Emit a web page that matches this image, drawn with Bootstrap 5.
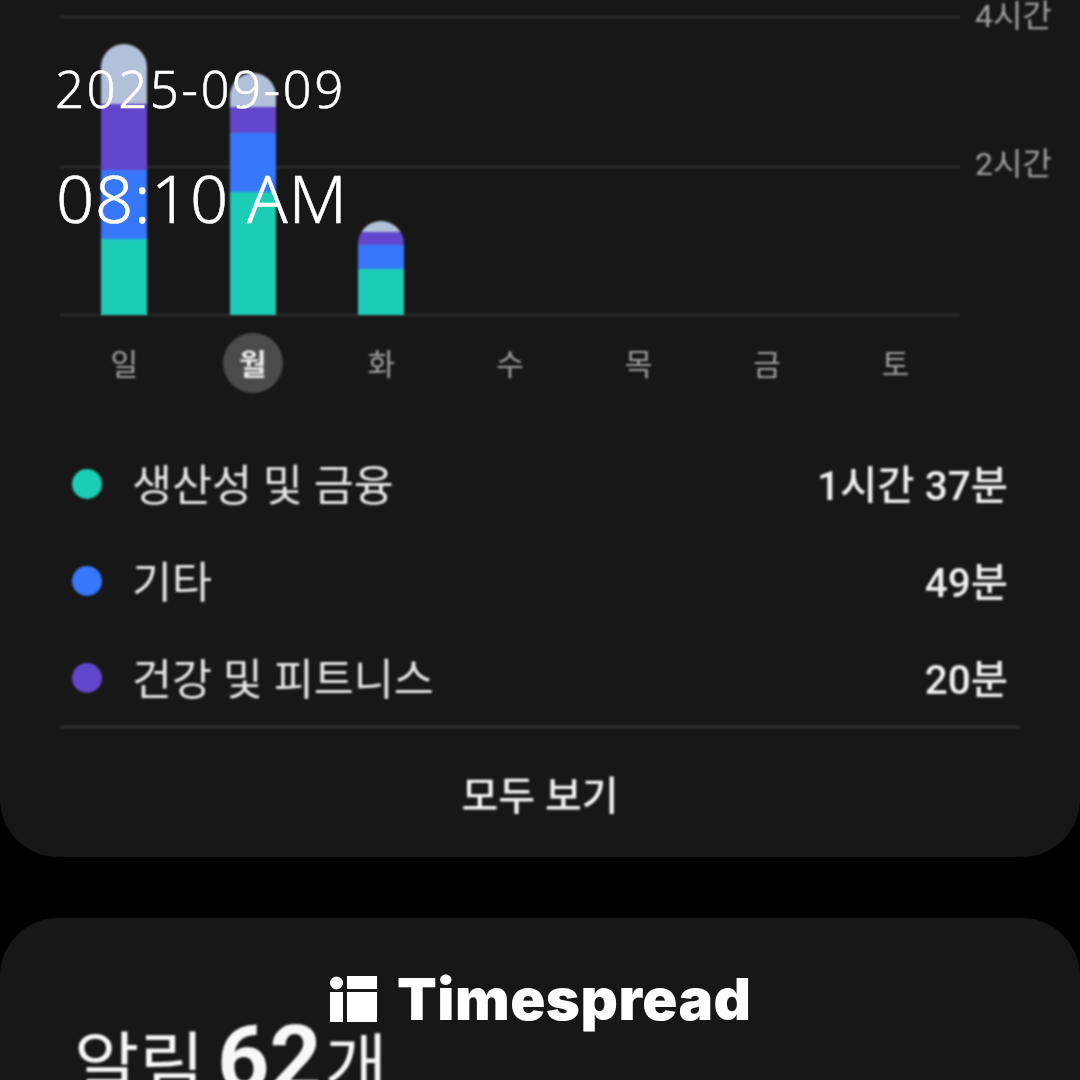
<!DOCTYPE html>
<html lang="ko">
<head>
  <meta charset="UTF-8" />
  <meta name="viewport" content="width=device-width, initial-scale=1.0"/>
  <title>Timespread</title>
  <link href="https://cdn.jsdelivr.net/npm/bootstrap@5.3.0/dist/css/bootstrap.min.css" rel="stylesheet" />
  <style>
    html, body {
      height: 1080px;
      overflow: hidden;
      background: #000;
    }
    body {
      font-family: Roboto, "Noto Sans CJK KR", sans-serif;
      position: relative;
    }
    .panel {
      background: #171717;
    }
    .soft {
      filter: blur(.8px);
    }
    .usage-panel {
      height: 857px;
      border-radius: 0 0 58px 58px;
      padding: 16px 60px 0;
    }
    .notice-panel {
      height: 162px;
      margin-top: 61px;
      border-radius: 58px 58px 0 0;
      padding: 96px 0 0 74px;
      color: #f8f8f8;
      font-size: 71px;
      line-height: 84px;
      font-weight: 400;
      white-space: nowrap;
    }
    .notice-panel b {
      font-size: 91px;
      font-weight: 700;
      line-height: 1;
      margin: 0 0 0 -5px;
    }
    .notice-unit {
      font-size: 68px;
      margin-left: 3px;
    }
    .plot {
      position: relative;
      width: 900px;
      height: 300px;
    }
    .grid-line {
      position: absolute;
      left: 0;
      right: 0;
      height: 2px;
      background: #303030;
    }
    .axis-label {
      position: absolute;
      left: 915px;
      color: #a2a2a2;
      font-size: 32px;
      line-height: 36px;
      white-space: nowrap;
    }
    .week-col {
      width: calc(100% / 7);
    }
    .bar {
      width: 46px;
      margin-bottom: 1px;
      border-radius: 23px 23px 0 0;
      overflow: hidden;
    }
    .seg-rest { background: #b3c0da; }
    .seg-teal { background: #1ccdb5; }
    .seg-blue { background: #3778fb; }
    .seg-purple { background: #6247cc; }
    .day-label {
      width: 60px;
      height: 60px;
      line-height: 64px;
      text-align: center;
      color: #a2a2a2;
      font-size: 30px;
    }
    .day-today {
      background: #4b4b4b;
      color: #ececec;
      font-weight: 700;
    }
    .legend-list {
      margin-top: 45px;
    }
    .legend-row {
      height: 97px;
      font-size: 43.5px;
      color: #e8e8e8;
    }
    .legend-dot {
      width: 30px;
      height: 30px;
      margin: 0 30px 6px 12px;
    }
    .legend-value {
      margin-right: 12px;
      font-size: 40.5px;
      font-weight: 500;
      color: #f0f0f0;
    }
    .legend-foot {
      width: 960px;
      border-top: 2px solid #353535;
      margin-top: -3px;
      height: 129px;
      line-height: 138px;
      text-align: center;
      color: #f4f4f4;
      font-size: 40px;
      font-weight: 500;
    }
    .stamp {
      position: absolute;
      color: #fff;
      font-family: "Noto Sans", sans-serif;
      font-weight: 300;
      -webkit-text-stroke: .5px #fff;
      white-space: nowrap;
    }
    .stamp-date {
      left: 55px;
      top: 53px;
      font-size: 51px;
      line-height: 70px;
      letter-spacing: 2.5px;
    }
    .stamp-time {
      left: 56px;
      top: 151px;
      font-size: 67px;
      line-height: 92px;
      letter-spacing: .7px;
    }
    .brand {
      position: absolute;
      left: 330px;
      top: 976px;
      color: #fff;
    }
    .brand-name {
      font-family: Inter, sans-serif;
      font-weight: 900;
      font-size: 58px;
      line-height: 46px;
      letter-spacing: .5px;
      margin-left: 20px;
    }
  </style>
</head>

<body>
  <div class="panel usage-panel">
    <div class="soft">
      <!-- 주간 차트 -->
      <div class="plot">
        <div class="grid-line" style="top:0"></div>
        <div class="grid-line" style="top:150px"></div>
        <div class="grid-line" style="top:298px"></div>
        <span class="axis-label" style="top:-18px">4시간</span>
        <span class="axis-label" style="top:130px">2시간</span>
        <div class="d-flex align-items-end h-100 position-relative">
          <div class="week-col d-flex justify-content-center">
            <div class="bar">
              <div class="seg-rest" style="height:60px"></div>
              <div class="seg-purple" style="height:66px"></div>
              <div class="seg-blue" style="height:69px"></div>
              <div class="seg-teal" style="height:76px"></div>
            </div>
          </div>
          <div class="week-col d-flex justify-content-center">
            <div class="bar">
              <div class="seg-rest" style="height:34px"></div>
              <div class="seg-purple" style="height:26px"></div>
              <div class="seg-blue" style="height:59px"></div>
              <div class="seg-teal" style="height:123px"></div>
            </div>
          </div>
          <div class="week-col d-flex justify-content-center">
            <div class="bar">
              <div class="seg-rest" style="height:11px"></div>
              <div class="seg-purple" style="height:13px"></div>
              <div class="seg-blue" style="height:24px"></div>
              <div class="seg-teal" style="height:46px"></div>
            </div>
          </div>
          <div class="week-col"></div>
          <div class="week-col"></div>
          <div class="week-col"></div>
          <div class="week-col"></div>
        </div>
      </div>

      <div class="d-flex" style="width:900px;margin-top:17px">
        <div class="week-col d-flex justify-content-center"><span class="day-label rounded-circle">일</span></div>
        <div class="week-col d-flex justify-content-center"><span class="day-label day-today rounded-circle">월</span></div>
        <div class="week-col d-flex justify-content-center"><span class="day-label rounded-circle">화</span></div>
        <div class="week-col d-flex justify-content-center"><span class="day-label rounded-circle">수</span></div>
        <div class="week-col d-flex justify-content-center"><span class="day-label rounded-circle">목</span></div>
        <div class="week-col d-flex justify-content-center"><span class="day-label rounded-circle">금</span></div>
        <div class="week-col d-flex justify-content-center"><span class="day-label rounded-circle">토</span></div>
      </div>

      <!-- 범례 -->
      <div class="legend-list">
        <div class="legend-row d-flex align-items-center">
          <span class="legend-dot seg-teal rounded-circle"></span>
          <span>생산성 및 금융</span>
          <span class="legend-value ms-auto">1시간 37분</span>
        </div>
        <div class="legend-row d-flex align-items-center">
          <span class="legend-dot seg-blue rounded-circle"></span>
          <span>기타</span>
          <span class="legend-value ms-auto">49분</span>
        </div>
        <div class="legend-row d-flex align-items-center">
          <span class="legend-dot seg-purple rounded-circle"></span>
          <span>건강 및 피트니스</span>
          <span class="legend-value ms-auto">20분</span>
        </div>
      </div>
      <div class="legend-foot">모두 보기</div>
    </div>
  </div>

  <div class="panel notice-panel"><div class="soft">알림 <b>62</b><span class="notice-unit">개</span></div></div>

  <!-- 타임스탬프 오버레이 -->
  <div class="stamp stamp-date">2025-09-09</div>
  <div class="stamp stamp-time">08:10 AM</div>
  <div class="brand d-flex align-items-center">
    <svg width="47" height="46" viewBox="0 0 47 46" fill="#fff">
      <circle cx="6.5" cy="7" r="6.5"/>
      <rect x="0" y="16" width="13" height="30"/>
      <rect x="17" y="0" width="30" height="13"/>
      <rect x="17" y="16" width="30" height="30"/>
    </svg>
    <span class="brand-name">Timespread</span>
  </div>

  <script src="https://cdn.jsdelivr.net/npm/bootstrap@5.3.0/dist/js/bootstrap.bundle.min.js"></script>
</body>
</html>
